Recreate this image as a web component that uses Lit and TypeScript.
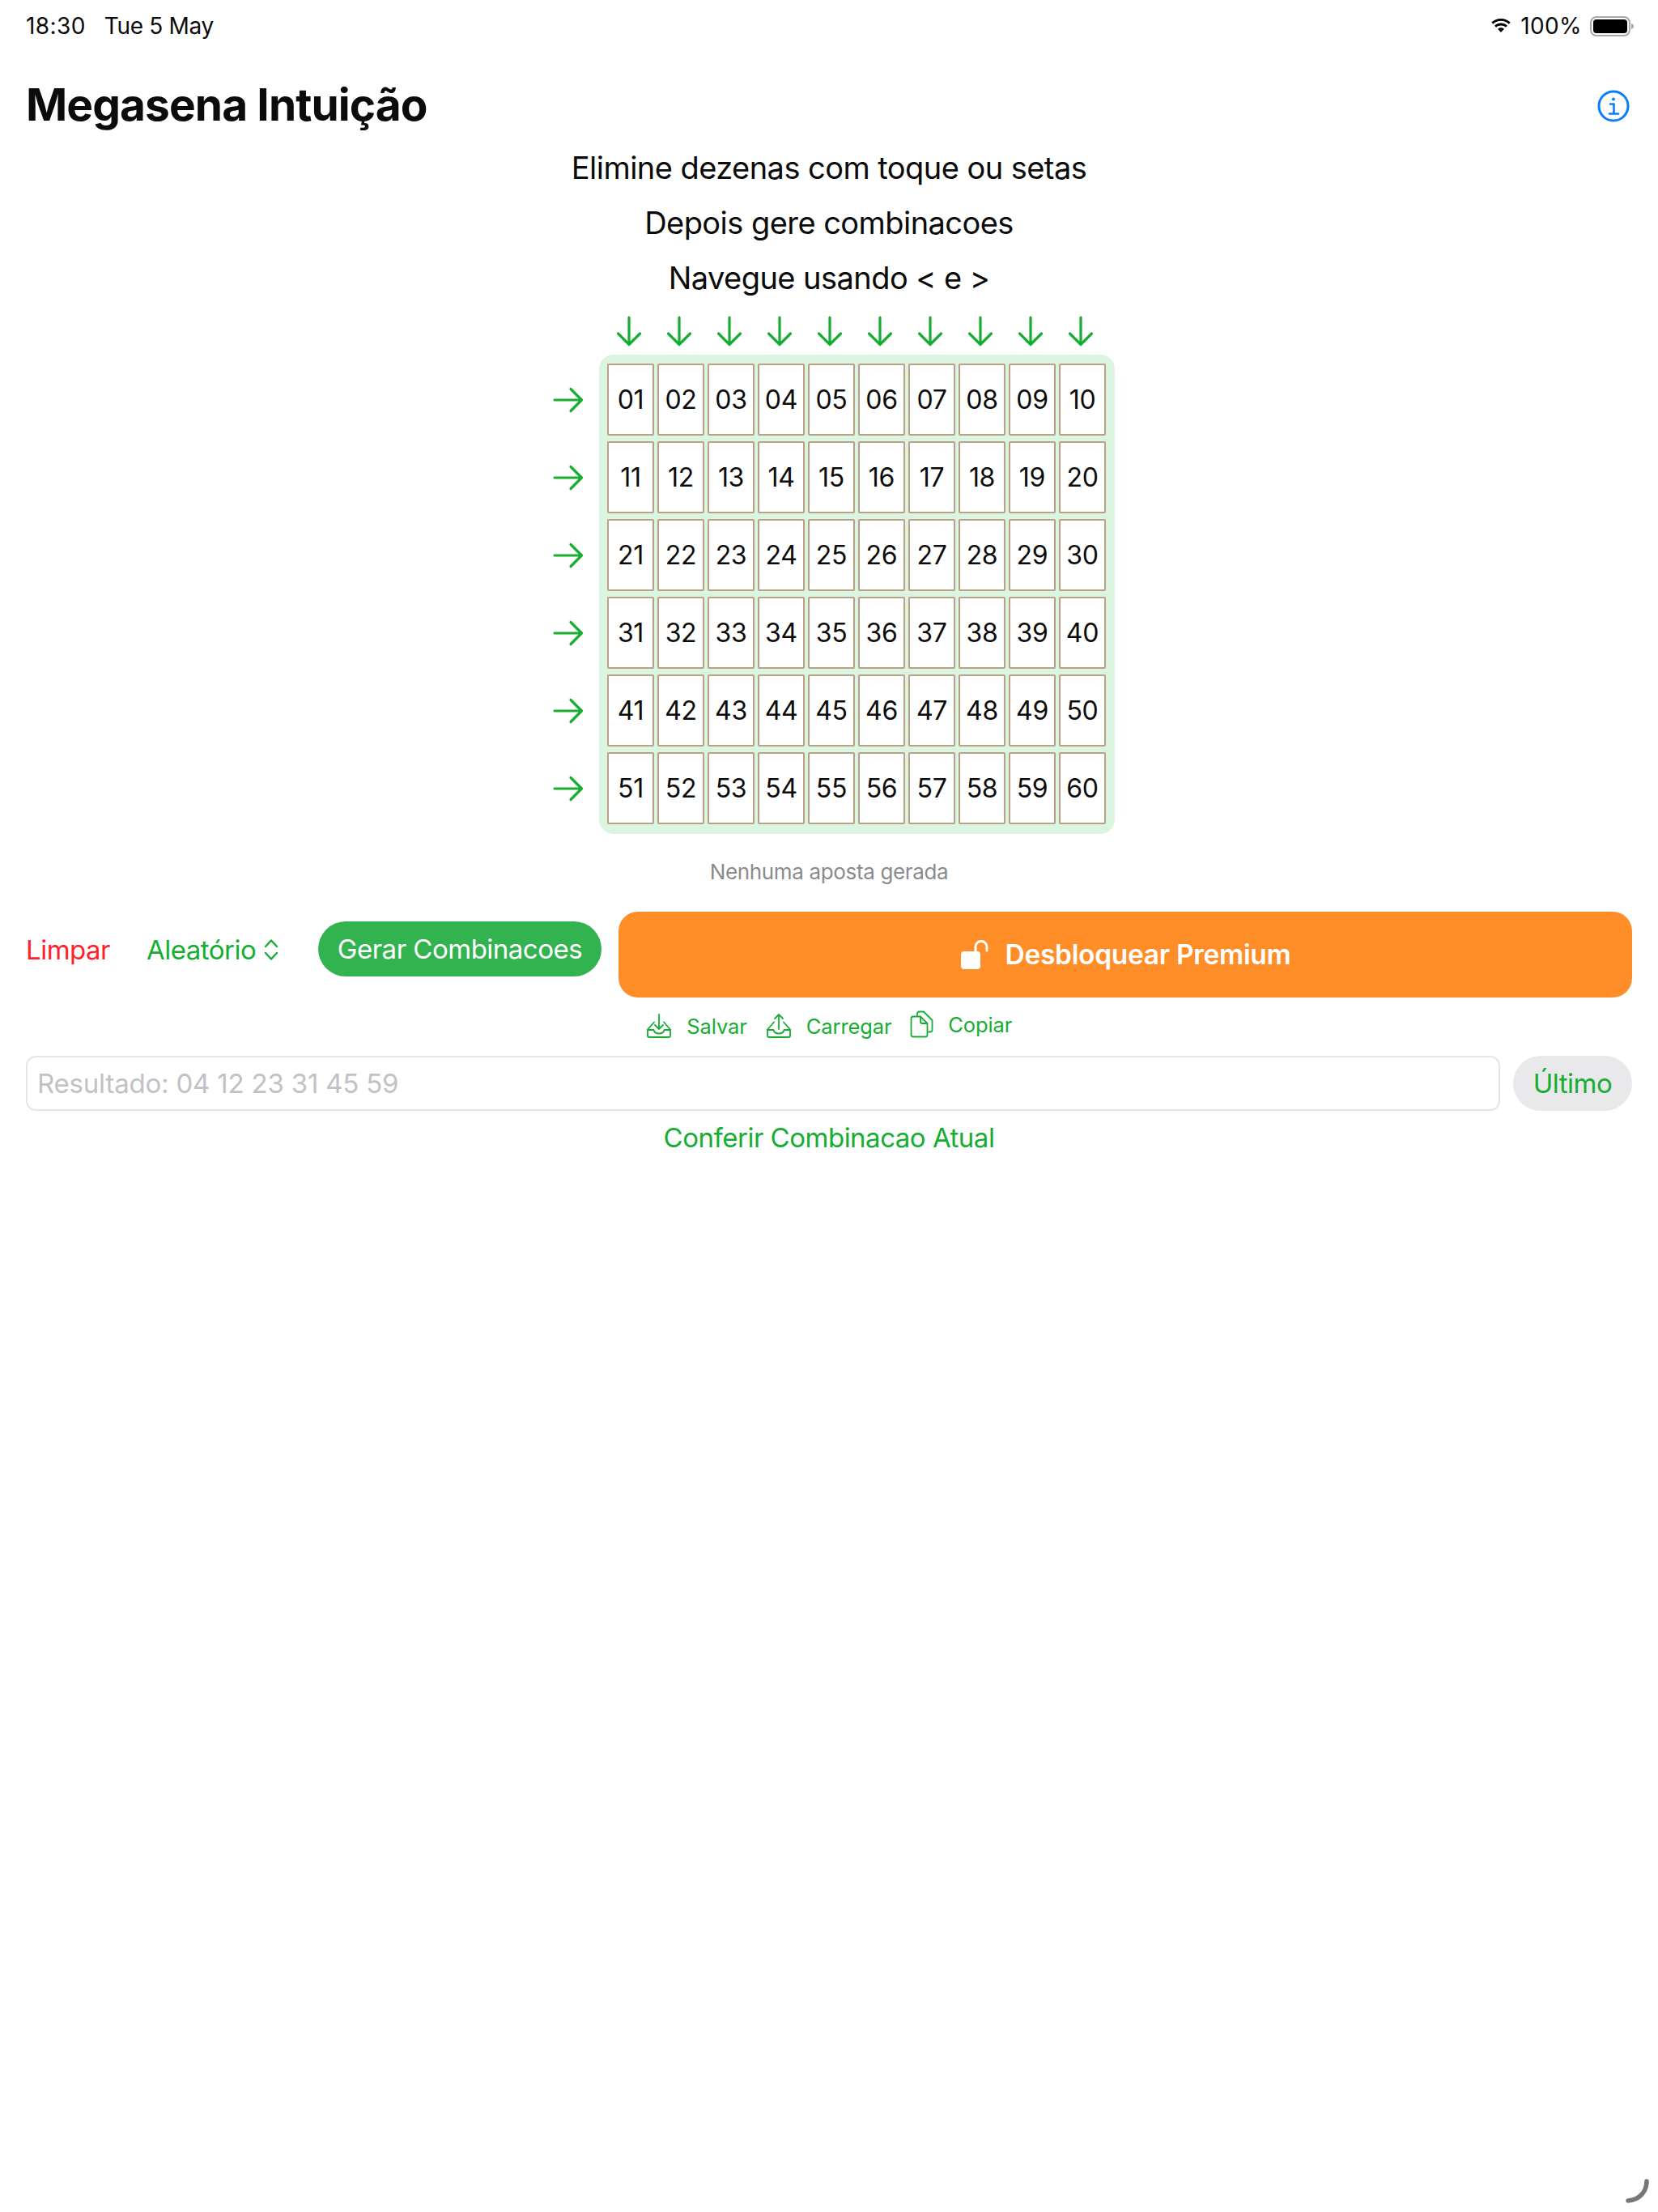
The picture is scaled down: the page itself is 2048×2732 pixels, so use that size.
import { LitElement, html, css, svg } from "lit";
import { customElement } from "lit/decorators.js";

const G = "#16ad32";
const nums = Array.from({ length: 60 }, (_, i) => String(i + 1).padStart(2, "0"));
const cols = Array.from({ length: 10 });
const rows = Array.from({ length: 6 });

const down = html`<svg class="down" viewBox="0 0 32 38" fill="none" stroke=${G} stroke-width="3.2" stroke-linecap="round" stroke-linejoin="round"><path d="M16 2V35.5M2.5 22 16 35.5 29.5 22"/></svg>`;
const right = html`<svg class="right" viewBox="0 0 38 32" fill="none" stroke=${G} stroke-width="3.2" stroke-linecap="round" stroke-linejoin="round"><path d="M2 16H35.5M22 2.5 35.5 16 22 29.5"/></svg>`;
const tray = (up: boolean) => html`<svg class="tray" viewBox="0 0 32 32" fill="none" stroke=${G} stroke-width="1.8" stroke-linecap="round" stroke-linejoin="round">
  <path d="M10 11.5 2 20.5V28.5Q2 30 3.5 30H28.5Q30 30 30 28.5V20.5L22 11.5"/><path d="M2 21H9.5Q10.5 25.5 16 25.5T22.5 21H30"/>
  ${up ? svg`<path d="M16 20V2M11 7 16 2 21 7"/>` : svg`<path d="M16 2V20M11 15 16 20 21 15"/>`}</svg>`;

@customElement("app-root")
export class AppRoot extends LitElement {
  static styles = css`
    :host { display: block; position: relative; height: 2732px; background: #fff; font-family: Inter, "Liberation Sans", sans-serif; color: #0b0b0b; overflow: hidden; }
    .status { display: flex; justify-content: space-between; align-items: center; height: 34px; padding: 15px 29px 0 32px; font-size: 28px; letter-spacing: -0.2px; }
    .status .time { letter-spacing: 0.4px; }
    .status .date { margin-left: 23px; letter-spacing: -0.3px; }
    .status .pct { letter-spacing: 0.4px; }
    .status .right-side { display: flex; align-items: center; }
    .status .left-side { display: flex; }
    .wifi { width: 28px; height: 20px; margin-right: 10px; }
    .battery { width: 55px; height: 25px; margin-left: 10px; }
    .head { display: flex; justify-content: space-between; align-items: center; height: 60px; padding: 50px 35px 0 32px; }
    h1 { margin: 0; font-size: 55px; font-weight: 700; letter-spacing: -0.9px; line-height: 60px; }
    .info { width: 40px; height: 40px; margin-top: 3px; }
    .lines { display: flex; flex-direction: column; align-items: center; margin-top: 14px; }
    .lines div { height: 68px; line-height: 68px; font-size: 38px; letter-spacing: -0.55px; }
    .board { display: grid; grid-template-columns: 57px 637px; padding-left: 683px; margin-top: 13px; }
    .downs { grid-column: 2; display: grid; grid-template-columns: repeat(10, 58px); column-gap: 4px; padding: 0 0 0 8px; height: 48px; justify-items: center; align-items: start; }
    .down { width: 32px; height: 38px; }
    .arrows { display: grid; grid-template-rows: repeat(6, 89px); row-gap: 7px; padding-top: 11px; align-items: center; }
    .right { width: 38px; height: 32px; display: block; }
    .panel { display: grid; grid-template-columns: repeat(10, 58px); grid-auto-rows: 89px; gap: 7px 4px; padding: 11px 11px 12px 10px; background: #dcf5e1; border-radius: 18px; }
    .cell { box-sizing: border-box; display: flex; align-items: center; justify-content: center; background: #fff; border: 2px solid #bba088; border-radius: 2px; font-size: 32px; letter-spacing: -0.3px; }
    .none { text-align: center; font-size: 26px; letter-spacing: -0.35px; color: #8a8a8e; margin-top: 31px; height: 32px; line-height: 32px; }
    .actions { display: flex; padding: 0 32px; margin-top: 33px; height: 106px; }
    .limpar { color: #ff1f2d; font-size: 33px; line-height: 36px; margin-top: 29px; letter-spacing: -0.5px; width: 149px; }
    .aleat { display: flex; align-items: center; gap: 9px; color: #16ad32; font-size: 33px; line-height: 36px; height: 36px; margin-top: 29px; letter-spacing: -0.5px; width: 212px; }
    .aleat svg { width: 20px; height: 30px; }
    .gerar { box-sizing: border-box; width: 350px; height: 68px; margin-top: 12px; border-radius: 34px; background: #33b34f; color: #fff; font-size: 33px; display: flex; align-items: center; justify-content: center; letter-spacing: -0.5px; }
    .premium { margin-left: 21px; flex: 1; height: 106px; border-radius: 24px; background: #ff8d28; color: #fff; display: flex; align-items: center; justify-content: center; gap: 20px; font-size: 33.5px; font-weight: 600; letter-spacing: -0.3px; }
    .premium svg { width: 36px; height: 38px; }
    .tools { display: flex; padding-left: 798px; margin-top: 18px; height: 34px; align-items: center; color: #16ad32; font-size: 25.5px; letter-spacing: -0.1px; }
    .tool { display: flex; align-items: center; gap: 18.3px; margin-right: 22.7px; }
    .tray { width: 32px; height: 32px; }
    .copy { width: 30px; height: 34px; }
    .copytool { gap: 17px; margin-top: -4px; }
    .result { display: flex; gap: 16px; padding: 0 32px; margin-top: 20px; }
    .input { box-sizing: border-box; flex: 1; height: 68px; border: 2px solid #e6e6e8; border-radius: 12px; padding-left: 12px; display: flex; align-items: center; color: #c2c2c6; font-size: 33px; letter-spacing: -0.2px; }
    .ultimo { width: 147px; height: 68px; border-radius: 34px; background: #e9e9eb; color: #16ad32; display: flex; align-items: center; justify-content: center; font-size: 33px; letter-spacing: -0.5px; }
    .conf { text-align: center; color: #16ad32; font-size: 33px; letter-spacing: -0.5px; margin-top: 13px; line-height: 40px; }
    .spinner { position: absolute; left: 2006px; top: 2690px; width: 36px; height: 34px; }
  `;

  render() {
    return html`
      <div class="status">
        <div class="left-side"><span class="time">18:30</span><span class="date">Tue 5 May</span></div>
        <div class="right-side">
          <svg class="wifi" viewBox="0 0 30 22"><path d="M15 4.2c4.1 0 7.9 1.6 10.7 4.2l2.2-2.3C24.5 2.9 20 1 15 1S5.5 2.9 2.1 6.1l2.2 2.3C7.1 5.8 10.9 4.2 15 4.2z"/><path d="M15 10.4c2.5 0 4.8.9 6.5 2.5l2.2-2.3C21.4 8.5 18.3 7.2 15 7.2s-6.4 1.3-8.7 3.4l2.2 2.3c1.7-1.6 4-2.5 6.5-2.5z"/><path d="M15 13.4c-1.7 0-3.3.7-4.4 1.7L15 19.8l4.4-4.7c-1.1-1-2.7-1.7-4.4-1.7z"/></svg>
          <span class="pct">100%</span>
          <svg class="battery" viewBox="0 0 55 25"><rect x="1" y="1" width="48" height="23" rx="7" fill="none" stroke="#a8a8a8" stroke-width="2"/><rect x="4" y="4" width="42" height="17" rx="4" fill="#000"/><path d="M51 9c2 .5 3 2 3 3.500s-1 3-3 3.500z" fill="#a8a8a8"/></svg>
        </div>
      </div>
      <div class="head">
        <h1>Megasena Intuição</h1>
        <svg class="info" viewBox="0 0 40 40" fill="none" stroke="#0a7cff" stroke-width="3" stroke-linecap="round" stroke-linejoin="round"><circle cx="20" cy="20" r="18"/><path d="M16 17.500h4.500V29M15 29.500h11" stroke-width="2.600"/><circle cx="20" cy="11.500" r="2" fill="#0a7cff" stroke="none"/></svg>
      </div>
      <div class="lines">
        <div>Elimine dezenas com toque ou setas</div>
        <div>Depois gere combinacoes</div>
        <div>Navegue usando &lt; e &gt;</div>
      </div>
      <div class="board">
        <div class="downs">${cols.map(() => down)}</div>
        <div class="arrows">${rows.map(() => right)}</div>
        <div class="panel">${nums.map((n) => html`<div class="cell">${n}</div>`)}</div>
      </div>
      <div class="none">Nenhuma aposta gerada</div>
      <div class="actions">
        <div class="limpar">Limpar</div>
        <div class="aleat">Aleatório
          <svg viewBox="0 0 20 30" fill="none" stroke=${G} stroke-width="2.400" stroke-linecap="round" stroke-linejoin="round"><path d="M3 11 10 3.500 17 11M3 19 10 26.500 17 19"/></svg>
        </div>
        <div class="gerar">Gerar Combinacoes</div>
        <div class="premium">
          <svg viewBox="0 0 36 38" fill="#fff"><rect x="1" y="15" width="24" height="22" rx="4"/><path d="M19 16V9.500a7 7 0 0 1 14 0V14" fill="none" stroke="#fff" stroke-width="3" stroke-linecap="round"/></svg>
          <span>Desbloquear Premium</span>
        </div>
      </div>
      <div class="tools">
        <div class="tool">${tray(false)}<span>Salvar</span></div>
        <div class="tool">${tray(true)}<span>Carregar</span></div>
        <div class="tool copytool">
          <svg class="copy" viewBox="0 0 30 34" fill="none" stroke=${G} stroke-width="1.800" stroke-linecap="round" stroke-linejoin="round"><path d="M9 7V4Q9 1.500 11.500 1.500H17L27.500 12V24Q27.500 26.500 25 26.500H23"/><path d="M4 7.500H13L21.500 16V30Q21.500 32.500 19 32.500H4Q1.500 32.500 1.500 30V10Q1.500 7.500 4 7.500Z"/><path d="M13 8V14Q13 16 15 16H21"/></svg>
          <span>Copiar</span>
        </div>
      </div>
      <div class="result">
        <div class="input">Resultado: 04 12 23 31 45 59</div>
        <div class="ultimo">Último</div>
      </div>
      <div class="conf">Conferir Combinacao Atual</div>
      <svg class="spinner" viewBox="0 0 36 34" fill="none" stroke="#777" stroke-width="5.500" stroke-linecap="round"><path d="M28 4C28 17 19 27 5 28"/></svg>
    `;
  }
}
